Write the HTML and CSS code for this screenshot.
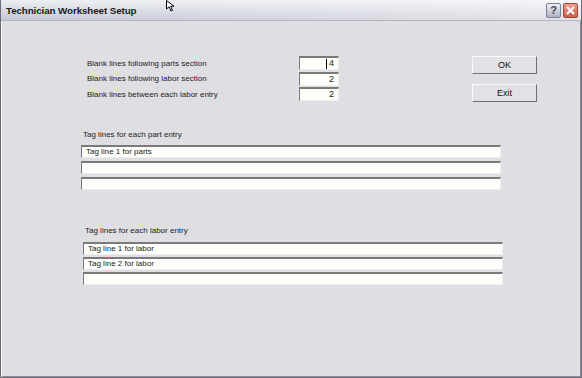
FILE: index.html
```
<!DOCTYPE html>
<html lang="en">
<head>
  <meta charset="UTF-8">
  <title>Technician Worksheet Setup</title>
  <link rel="stylesheet" href="styles.css">
</head>
<body>
  <div class="window">
    <div class="titlebar">
      <span class="title">Technician Worksheet Setup</span>
      <div class="caption-buttons">
        <span class="cap-btn help">?</span>
        <span class="cap-btn close">
          <svg width="9" height="9" viewBox="0 0 9 9"><path d="M1 1 L8 8 M8 1 L1 8" stroke="#fff" stroke-width="2"/></svg>
        </span>
      </div>
      <svg class="pointer" width="12" height="12" viewBox="0 0 12 12">
        <path d="M0.5 0.5 L0.5 9 L3 6.8 L5 11 L6.5 10.3 L4.6 6.3 L8 6.3 Z" fill="#fff" stroke="#000" stroke-width="1"/>
      </svg>
    </div>

    <div class="client">
      <div class="top">
        <div class="settings">
          <div class="row">
            <label>Blank lines following parts section</label>
            <div class="num"><span class="caret"></span>4</div>
          </div>
          <div class="row">
            <label>Blank lines following labor section</label>
            <div class="num">2</div>
          </div>
          <div class="row">
            <label>Blank lines between each labor entry</label>
            <div class="num">2</div>
          </div>
        </div>
        <div class="actions">
          <button>OK</button>
          <button>Exit</button>
        </div>
      </div>

      <div class="section parts">
        <div class="caption">Tag lines for each part entry</div>
        <div class="field">Tag line 1 for parts</div>
        <div class="field"></div>
        <div class="field"></div>
      </div>

      <div class="section labor">
        <div class="caption">Tag lines for each labor entry</div>
        <div class="field">Tag line 1 for labor</div>
        <div class="field">Tag line 2 for labor</div>
        <div class="field"></div>
      </div>
    </div>
  </div>
</body>
</html>
```
FILE: styles.css
```
html, body {
  margin: 0;
  padding: 0;
}
body {
  width: 582px;
  height: 378px;
  overflow: hidden;
  font-family: 'Liberation Sans', Arial, sans-serif;
  color: #1c1c1c;
}
.window {
  box-sizing: border-box;
  width: 582px;
  height: 378px;
  background: #dfdee3;
  border: 1px solid #6b6c78;
  border-top: none;
  box-shadow: inset 1px 0 0 #f2f2f5, inset -1px 0 0 #8d8e99, inset 0 -1px 0 #8d8e99;
  display: flex;
  flex-direction: column;
}
.titlebar {
  position: relative;
  height: 20px;
  display: flex;
  align-items: center;
  justify-content: space-between;
  padding: 0 3px 0 5px;
  background-image: linear-gradient(to right, rgba(255,255,255,0) 0%, rgba(255,255,255,0.5) 100%),
    linear-gradient(to bottom, #eceef3 0%, #d4d6e0 60%, #c5c7d3 100%);
  border-bottom: 1px solid #b4b6c2;
}
.title {
  font-weight: bold;
  font-size: 9.8px;
  letter-spacing: -0.1px;
  color: #1a1a1a;
  padding-top: 1px;
}
.caption-buttons {
  display: flex;
  gap: 2px;
}
.cap-btn {
  box-sizing: border-box;
  width: 15px;
  height: 15px;
  border-radius: 2px;
  display: flex;
  align-items: center;
  justify-content: center;
  font-size: 11px;
  font-weight: bold;
}
.help {
  background: linear-gradient(to bottom, #eef0f6, #aeb1c4);
  border: 1px solid #7f8296;
  color: #444;
}
.close {
  background: linear-gradient(to bottom, #e9a294, #c8604c);
  border: 1px solid #a24434;
}
.pointer {
  position: absolute;
  left: 165px;
  top: 0;
}
.client {
  flex: 1;
  padding: 35px 0 0 86px;
  font-size: 8px;
}
.top {
  display: flex;
}
.settings {
  width: 252px;
}
.row {
  display: flex;
  align-items: center;
  justify-content: space-between;
  height: 14px;
  margin-bottom: 1.5px;
}
.num, .field {
  box-sizing: border-box;
  background: #fdfdf9;
  border-top: 2px solid #7a7a7a;
  border-left: 1px solid #7a7a7a;
  border-right: 1px solid #efefef;
  border-bottom: 1px solid #efefef;
}
.num {
  position: relative;
  width: 40px;
  height: 14px;
  text-align: right;
  padding-right: 4px;
  font-size: 9px;
  line-height: 11px;
}
.caret {
  position: absolute;
  right: 11px;
  top: 1px;
  width: 1px;
  height: 10px;
  background: #000;
}
.actions {
  margin-left: 133px;
  display: flex;
  flex-direction: column;
  gap: 10px;
}
button {
  box-sizing: border-box;
  width: 65px;
  height: 18px;
  padding: 0;
  font-family: inherit;
  font-size: 9px;
  color: #111;
  background: #e2e1e6;
  border: 1px solid;
  border-color: #fafafa #6f6f76 #6f6f76 #fafafa;
}
.section {
  margin-left: -6px;
  width: 420px;
}
.parts {
  margin-top: 27px;
}
.labor {
  margin-top: 36px;
  margin-left: -4px;
}
.caption {
  margin-left: 2px;
  margin-bottom: 5px;
  height: 10px;
}
.labor .caption {
  margin-left: 2px;
  margin-bottom: 6px;
}
.field {
  height: 13px;
  margin-bottom: 3px;
  padding-left: 4px;
  line-height: 10px;
  font-size: 8px;
}
.labor .field {
  margin-bottom: 2px;
}
```
